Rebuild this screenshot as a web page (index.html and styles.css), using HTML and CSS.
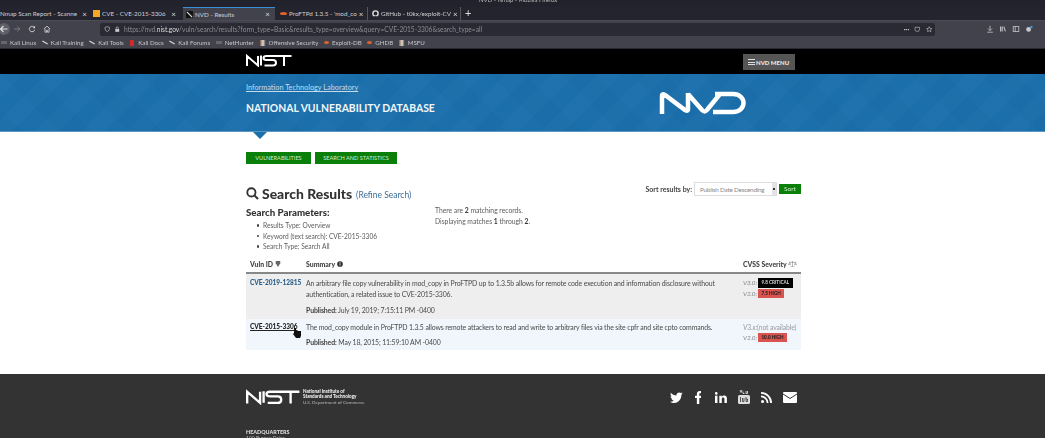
FILE: index.html
```html
<!DOCTYPE html>
<html lang="en">
<head>
  <meta charset="UTF-8">
  <title>NVD - Results</title>
  <link rel="stylesheet" href="styles.css">
</head>
<body>
  <div class="titlebar"><span class="window-title">NVD - Nmap - Mozilla Firefox</span></div>

  <div class="tabs">
    <div class="tab tab-first"><span class="tab-label">Nmap Scan Report - Scanne</span><span class="tab-x">×</span></div>
    <div class="tab tab-cve"><span class="favicon fav-orange"></span><span class="tab-label">CVE - CVE-2015-3306</span><span class="tab-x">×</span></div>
    <div class="tab tab-active"><svg class="favicon" viewBox="0 0 8 8"><rect width="8" height="8" fill="#111"/><path d="M1 1l6 6" stroke="#ddd" stroke-width="1.4"/></svg><span class="tab-label">NVD - Results</span><span class="tab-x">×</span></div>
    <div class="tab tab-pro"><span class="favicon fav-flame"></span><span class="tab-label">ProFTPd 1.3.5 - 'mod_co</span><span class="tab-x">×</span></div>
    <div class="tab tab-gh"><svg class="favicon" viewBox="0 0 8 8"><circle cx="4" cy="4" r="3" fill="none" stroke="#ddd" stroke-width="1.6"/><path d="M2.5 7.5h3" stroke="#2a2a35"/></svg><span class="tab-label">GitHub - t0kx/exploit-CV</span><span class="tab-x">×</span></div>
    <span class="tab-new">+</span>
  </div>

  <div class="toolbar">
    <span class="nav-back"><svg viewBox="0 0 10 10"><path d="M8.5 5h-7M4.5 2l-3 3 3 3" fill="none" stroke="#e4e4e8" stroke-width="1.1"/></svg></span>
    <svg class="nav-ico dim" viewBox="0 0 10 10"><path d="M1.5 5h7M5.5 2l3 3-3 3" fill="none" stroke="#85858c" stroke-width="1"/></svg>
    <svg class="nav-ico" viewBox="0 0 10 10"><path d="M8 3.2A3.4 3.4 0 1 0 8.4 6" fill="none" stroke="#d8d8dc" stroke-width="1.1"/><path d="M8.8 1v3h-3z" fill="#d8d8dc"/></svg>
    <svg class="nav-ico" viewBox="0 0 10 10"><path d="M1 5l4-3.5L9 5M2.5 4.5V9h2V6.5h1V9h2V4.5" fill="none" stroke="#d8d8dc" stroke-width="1"/></svg>
    <div class="urlbar">
      <svg class="url-ico" viewBox="0 0 10 10"><path d="M5 1l3.5 1.2c0 3.2-1 5.3-3.5 6.6C2.500 7.500 1.500 5.400 1.500 2.200z" fill="none" stroke="#c8c8cc" stroke-width="1"/></svg>
      <svg class="url-ico" viewBox="0 0 10 10"><rect x="2" y="4.500" width="6" height="4.500" fill="#c8c8cc"/><path d="M3.300 4.500V3a1.700 1.700 0 0 1 3.400 0v1.500" fill="none" stroke="#c8c8cc"/></svg>
      <span class="url-text">https://nvd.<b>nist.gov</b>/vuln/search/results?form_type=Basic&amp;results_type=overview&amp;query=CVE-2015-3306&amp;search_type=all</span>
      <span class="url-right">
        <span class="url-dots">•••</span>
        <svg class="url-ico" viewBox="0 0 10 10"><path d="M1.500 2h7v3a3.500 3.500 0 0 1-7 0z" fill="none" stroke="#b8b8bc"/></svg>
        <svg class="url-ico" viewBox="0 0 10 10"><path d="M5 1l1.200 2.700 2.900.3-2.200 1.900.7 2.900L5 7.300 2.400 8.800l.7-2.900L.9 4l2.900-.3z" fill="none" stroke="#c8c8cc" stroke-width=".9"/></svg>
      </span>
    </div>
    <div class="tool-right">
      <svg class="nav-ico" viewBox="0 0 10 10"><path d="M5 1v5.500M2.500 4.500L5 7l2.500-2.500M1.500 9h7" fill="none" stroke="#c8c8cc"/></svg>
      <svg class="nav-ico" viewBox="0 0 10 10"><path d="M2 2v6M4 2v6M6 2l2 6" fill="none" stroke="#c8c8cc" stroke-width="1.300"/></svg>
      <svg class="nav-ico" viewBox="0 0 10 10"><rect x="1.500" y="2" width="7" height="6" fill="none" stroke="#c8c8cc"/><path d="M4 2v6" stroke="#c8c8cc"/></svg>
      <svg class="nav-ico" viewBox="0 0 10 10"><circle cx="4.500" cy="5.500" r="3" fill="#c8c8cc"/><circle cx="8" cy="2.500" r="1.500" fill="#3a9ad9"/></svg>
    </div>
  </div>

  <div class="bookmarks">
    <span class="bm"><i class="bm-ico faint"></i>Kali Linux</span>
    <span class="bm"><i class="bm-ico dragon"></i>Kali Training</span>
    <span class="bm"><i class="bm-ico dragon"></i>Kali Tools</span>
    <span class="bm"><i class="bm-ico red"></i>Kali Docs</span>
    <span class="bm"><i class="bm-ico dragon"></i>Kali Forums</span>
    <span class="bm"><i class="bm-ico faint"></i>NetHunter</span>
    <span class="bm"><i class="bm-ico os"></i>Offensive Security</span>
    <span class="bm"><i class="bm-ico flame"></i>Exploit-DB</span>
    <span class="bm"><i class="bm-ico flame"></i>GHDB</span>
    <span class="bm"><i class="bm-ico os"></i>MSFU</span>
  </div>

  <header class="nist-bar">
    <div class="wrap nist-inner">
      <svg class="nist-logo" viewBox="0 0 92 24" role="img" aria-label="NIST">
        <path d="M2 23V3l22 19V3M30 2v20M70 3H41c-8 0-8 8 0 8h13c8 0 8 11 0 11H37M58 3h33M76 3v20" fill="none" stroke="#fff" stroke-width="4"/>
      </svg>
      <span class="menu-btn"><span class="burger"></span>NVD MENU</span>
    </div>
  </header>

  <section class="banner">
    <div class="wrap banner-inner">
      <div>
        <a class="itl" href="#">Information Technology Laboratory</a>
        <h1 class="nvd-name">NATIONAL VULNERABILITY DATABASE</h1>
      </div>
      <svg class="nvd-logo" viewBox="0 0 90 24" role="img" aria-label="NVD">
        <path d="M3 23V5c0-2 1-2 3-1l20 15c2 1 3 1 3-1V2M29 3l14 16c2 2 3 2 5 0L61 3M56 3h18c14 0 14 18 0 18H54" fill="none" stroke="#fff" stroke-width="4.500"/>
      </svg>
    </div>
  </section>
  <div class="notch"></div>

  <main class="wrap content">
    <nav class="green-nav">
      <a class="green-btn btn-vuln" href="#">VULNERABILITIES</a>
      <a class="green-btn btn-search" href="#">SEARCH AND STATISTICS</a>
    </nav>

    <div class="heading-row">
      <h2 class="results-title">
        <svg class="mag" viewBox="0 0 14 14"><circle cx="5.800" cy="5.800" r="4.400" fill="none" stroke="#333" stroke-width="2"/><path d="M9 9l4 4" stroke="#333" stroke-width="2.200"/></svg>
        <span>Search Results</span>
        <a class="refine" href="#">(Refine Search)</a>
      </h2>
      <form class="sort">
        <b>Sort results by:</b>
        <span class="sort-select">Publish Date Descending<i class="sort-arrows"></i></span>
        <span class="sort-btn">Sort</span>
      </form>
    </div>

    <div class="params-row">
      <div class="params">
        <h3>Search Parameters:</h3>
        <ul>
          <li>Results Type: Overview</li>
          <li>Keyword (text search): CVE-2015-3306</li>
          <li>Search Type: Search All</li>
        </ul>
      </div>
      <div class="matches">
        <p>There are <b>2</b> matching records.</p>
        <p>Displaying matches <b>1</b> through <b>2</b>.</p>
      </div>
    </div>

    <div class="grid-head">
      <span>Vuln ID <svg class="th-ico" viewBox="0 0 8 8"><path d="M1 0h6v3L4 8 1 3z" fill="#666"/></svg></span>
      <span>Summary <svg class="th-ico" viewBox="0 0 8 8"><circle cx="4" cy="4" r="3.800" fill="#333"/><path d="M4 3v3M4 1.400v1" stroke="#fff"/></svg></span>
      <span>CVSS Severity <svg class="th-ico scale" viewBox="0 0 12 9"><path d="M6 0v8M3 8.500h6M1 2h10M0 5.500l1.500-3.500L3 5.500zM9 5.500L10.500 2 12 5.500z" fill="none" stroke="#666" stroke-width=".7"/></svg></span>
    </div>

    <div class="result row-grey">
      <a class="cve" href="#">CVE-2019-12815</a>
      <div class="summary">
        <p>An arbitrary file copy vulnerability in mod_copy in ProFTPD up to 1.3.5b allows for remote code execution and information disclosure without authentication, a related issue to CVE-2015-3306.</p>
        <p class="published"><b>Published:</b> July 19, 2019; 7:15:11 PM -0400</p>
      </div>
      <div class="cvss">
        <div class="cvss-line"><i>V3.0:</i> <span class="sev sev-crit">9.8 CRITICAL</span></div>
        <div class="cvss-line"><i>V2.0:</i> <span class="sev sev-high">7.5 HIGH</span></div>
      </div>
    </div>

    <div class="result row-blue">
      <a class="cve cve-hover" href="#">CVE-2015-3306<svg class="hand" viewBox="0 0 9 10"><path d="M1 0h2v3h5v5l-1 2H3L0 6l1-1z" fill="#111"/></svg></a>
      <div class="summary">
        <p>The mod_copy module in ProFTPD 1.3.5 allows remote attackers to read and write to arbitrary files via the site cpfr and site cpto commands.</p>
        <p class="published"><b>Published:</b> May 18, 2015; 11:59:10 AM -0400</p>
      </div>
      <div class="cvss">
        <div class="cvss-line na"><i>V3.x:</i>(not available)</div>
        <div class="cvss-line"><i>V2.0:</i> <span class="sev sev-high">10.0 HIGH</span></div>
      </div>
    </div>
  </main>

  <footer class="footer">
    <div class="wrap">
      <div class="footer-top">
        <div class="foot-brand">
          <svg class="foot-logo" viewBox="0 0 92 24" role="img" aria-label="NIST">
            <path d="M2 23V3l22 19V3M30 2v20M70 3H41c-8 0-8 8 0 8h13c8 0 8 11 0 11H37M58 3h33M76 3v20" fill="none" stroke="#fff" stroke-width="4"/>
          </svg>
          <div class="foot-name"><b>National Institute of<br>Standards and Technology</b><br>U.S. Department of Commerce</div>
        </div>
        <div class="social">
          <svg class="tw" viewBox="0 0 14 12"><path d="M14 1.500l-1.500 1.200C12.500 8 9 12 4.500 12 2.800 12 1.200 11.500 0 10.600c1.600.2 3-.2 4.200-1.100C3 9.400 2 8.700 1.600 7.500h1.300C1.500 7.100.6 6 .6 4.500c.4.200.8.300 1.300.3C.6 3.900.3 2.200 1 .8 2.500 2.700 4.600 3.800 7 3.900 6.600 1.500 9.800-.8 11.800 1.200L13.600.6l-1 1.500z" fill="#fff"/></svg>
          <svg class="fb" viewBox="0 0 7 14"><path d="M2 14V7.500H0V5h2V3.200C2 1 3.300 0 5.200 0H7v2.400H5.800c-1 0-1.200.4-1.200 1.100V5H7l-.4 2.500h-2V14z" fill="#fff"/></svg>
          <svg viewBox="0 0 13 12"><rect y="4" width="2.700" height="8" fill="#fff"/><circle cx="1.350" cy="1.500" r="1.500" fill="#fff"/><path d="M4.700 12V4h2.600v1.200C8 4.200 9 3.800 10 3.800c2 0 3 1.300 3 3.500V12h-2.700V7.800c0-1.200-.4-1.800-1.400-1.800S7.400 6.700 7.400 7.800V12z" fill="#fff"/></svg>
          <svg class="yt" viewBox="0 0 12 14"><path d="M2 0l1 2.500L4 0M5 1.500v2h1.500M8 1v2.500h1.500V1" fill="none" stroke="#ddd" stroke-width=".9"/><rect y="5" width="12" height="9" rx="1.500" fill="#ddd"/><path d="M2.500 7v5M4.500 8v3.500h1.500V8M8 7v4.500h1.500V9H8" fill="none" stroke="#333" stroke-width=".8"/></svg>
          <svg viewBox="0 0 12 12"><circle cx="1.700" cy="10.300" r="1.700" fill="#fff"/><path d="M0 4.800a7.200 7.200 0 0 1 7.200 7.200M0 1a11 11 0 0 1 11 11" fill="none" stroke="#fff" stroke-width="2"/></svg>
          <svg viewBox="0 0 14 11"><rect width="14" height="11" rx="1" fill="#fff"/><path d="M0 2l7 4.500L14 2" fill="none" stroke="#333" stroke-width="1"/></svg>
        </div>
      </div>
      <h4 class="hq">HEADQUARTERS</h4>
      <p class="address">100 Bureau Drive</p>
    </div>
  </footer>
</body>
</html>
```

FILE: styles.css
```css
* { box-sizing: border-box; }

html, body {
  margin: 0;
  height: 438px;
  overflow: hidden;
}

body {
  font-family: 'Lato', 'Noto Sans', sans-serif;
  background: #fff;
  color: #555;
  filter: blur(0.35px);
}

p, h1, h2, h3, h4, ul { margin: 0; padding: 0; }

a { text-decoration: none; }

.wrap {
  width: 555px;
  margin-left: 246px;
}

/* browser chrome */
.titlebar {
  height: 7px;
  background: #22222c;
  position: relative;
  overflow: hidden;
}

.window-title {
  position: absolute;
  left: 479px;
  top: -4px;
  font-size: 6px;
  color: #bbb;
}

.tabs {
  height: 13px;
  background: #24242e;
  display: flex;
  align-items: stretch;
  color: #cfcfd4;
  font-size: 6.300px;
}

.tab {
  display: flex;
  align-items: center;
  gap: 2px;
  padding-right: 5px;
}

.tab-first { width: 92px; }
.tab-cve { width: 91px; padding-left: 1px; padding-right: 7px; }
.tab-active { width: 92px; background: #42424c; border-top: 1px solid #3a8fd6; padding-left: 3px; }
.tab-pro { width: 93px; padding-left: 5px; border-right: 1px solid #55555e; }
.tab-gh { width: 93px; padding-left: 4px; border-right: 1px solid #55555e; padding-right: 7px; }

.tab-label { flex: 1; white-space: nowrap; }
.tab-x { font-size: 8px; color: #ddd; }

.favicon { width: 7px; height: 7px; flex: none; display: block; }
.fav-orange { background: #f5a623; }
.fav-flame { background: #e2622c; border-radius: 50%; height: 3px; }

.tab-new { color: #ddd; font-size: 11px; line-height: 12px; margin-left: 4px; }

.toolbar {
  height: 17px;
  background: #42424c;
  border-top: 1px solid #4c4c56;
  display: flex;
  align-items: center;
}

.nav-back {
  width: 12px;
  height: 12px;
  margin-left: -2px;
  background: #5f5f68;
  border-radius: 50%;
  display: block;
}

.nav-back svg { display: block; width: 10px; height: 10px; margin: 1px; }

.nav-ico { width: 8px; height: 8px; flex: none; margin-left: 7px; }
.nav-ico.dim { margin-left: 3px; }

.urlbar {
  width: 835px;
  flex: none;
  height: 13px;
  margin-left: 49px;
  background: #2a2a34;
  border-radius: 2px;
  display: flex;
  align-items: center;
  padding: 0 3px 0 4px;
  gap: 3.500px;
  font-size: 6.600px;
  color: #8c8c94;
}

.url-ico { width: 6.500px; height: 6.500px; flex: none; }
.url-text { white-space: nowrap; }
.url-text b { color: #ddd; font-weight: 400; }
.url-right { margin-left: auto; display: flex; align-items: center; gap: 5px; color: #bbb; }
.url-dots { font-size: 4px; letter-spacing: -.5px; }

.tool-right { display: flex; margin-left: 51px; gap: 5px; }
.tool-right .nav-ico { margin-left: 0; }

.bookmarks {
  height: 12px;
  background: #42424c;
  display: flex;
  align-items: center;
  gap: 5.500px;
  padding-left: 1px;
  font-size: 6.200px;
  color: #c4c4ca;
  border-bottom: 1px solid #2a2a32;
}

.bm { display: flex; align-items: center; gap: 3px; white-space: nowrap; }

.bm-ico { display: block; width: 6px; height: 6px; flex: none; }
.dragon { height: 1px; background: #ddd; transform: rotate(30deg); }
.faint { height: 3px; background: #66666e; }
.red { background: #d02a2a; border-left: 1px solid #42424c; border-right: 1px solid #42424c; }
.os { background: linear-gradient(90deg, #8a5a3c, #ddd, #333); }
.flame { width: 5px; height: 3px; background: #e2622c; border-radius: 50%; }

/* site header */
.nist-bar {
  height: 25px;
  background: #000;
}

.nist-inner {
  display: flex;
  align-items: center;
  justify-content: space-between;
  height: 25px;
  padding-right: 6px;
}

.nist-logo { width: 46px; height: 13px; margin-top: -3px; }

.menu-btn {
  display: flex;
  align-items: center;
  gap: 1px;
  width: 52px;
  height: 16px;
  padding-left: 5px;
  background: #555;
  color: #e6e6e6;
  font-size: 6px;
  font-weight: 900;
  white-space: nowrap;
  margin-top: 1px;
}

.burger {
  flex: none;
  width: 7px;
  height: 6px;
  border-top: 1px solid #ddd;
  border-bottom: 1px solid #ddd;
  background: linear-gradient(#ddd, #ddd) center/100% 1px no-repeat;
}

.banner {
  height: 58px;
  background-color: #1b6fab;
  background-image:
    linear-gradient(135deg, rgba(255,255,255,.018) 25%, transparent 25%, transparent 50%, rgba(255,255,255,.018) 50%, rgba(255,255,255,.018) 75%, transparent 75%),
    linear-gradient(45deg, rgba(0,0,0,.018) 25%, transparent 25%, transparent 50%, rgba(0,0,0,.018) 50%, rgba(0,0,0,.018) 75%, transparent 75%);
  background-size: 46px 46px, 70px 70px;
  border-bottom: 1px solid #5b97c2;
}

.banner-inner {
  display: flex;
  justify-content: space-between;
  padding-top: 9px;
  padding-right: 52px;
}

.itl {
  display: block;
  color: #c6dcec;
  font-size: 7.300px;
  text-decoration: underline;
  line-height: 9px;
}

.nvd-name {
  color: #f2f6fa;
  font-size: 10.400px;
  font-weight: 700;
  line-height: 12px;
  margin-top: 10px;
}

.nvd-logo { width: 90px; height: 24px; margin-top: 8px; }

.notch {
  width: 0;
  height: 0;
  margin-left: 253px;
  border-left: 7px solid transparent;
  border-right: 7px solid transparent;
  border-top: 7px solid #1b6fab;
}

.content { height: 235px; padding-top: 13px; }

.green-nav {
  display: flex;
  gap: 4px;
}

.green-btn {
  display: block;
  height: 12px;
  line-height: 12px;
  background: #0a7f0a;
  color: #d8ecd8;
  font-size: 5.600px;
  text-align: center;
}

.btn-vuln { width: 65px; }
.btn-search { width: 82px; }

.heading-row {
  display: flex;
  justify-content: space-between;
  margin-top: 19px;
  align-items: flex-start;
}

.results-title {
  color: #333;
  font-size: 13.900px;
  font-weight: 900;
  line-height: 18px;
  display: flex;
  align-items: center;
  white-space: nowrap;
}

.mag { width: 13px; height: 13px; margin-right: 3px; }
.refine { color: #3a6d96; font-size: 8.500px; font-weight: 400; margin-left: 4px; margin-top: 3px; }

.sort {
  display: flex;
  align-items: center;
  gap: 2px;
  font-size: 7px;
  color: #444;
  margin-top: -1px;
}

.sort-select {
  width: 83px;
  height: 14px;
  line-height: 13px;
  background: #fff;
  border: 1px solid #ddd;
  padding-left: 5px;
  color: #888;
  font-size: 6.300px;
  letter-spacing: -.2px;
  position: relative;
}

.sort-arrows {
  position: absolute;
  right: 0;
  top: 0;
  width: 4px;
  height: 12px;
  background: linear-gradient(#333, #333) center/2px 2px no-repeat, #e4e4e4;
}

.sort-btn {
  width: 22px;
  height: 10px;
  line-height: 10px;
  background: #0a7f0a;
  color: #d8ecd8;
  font-size: 6.500px;
  text-align: center;
}

.params-row {
  display: grid;
  grid-template-columns: 189px 1fr;
  margin-top: 2px;
}

.params h3 {
  color: #333;
  font-size: 9.700px;
  font-weight: 900;
  line-height: 12px;
  white-space: nowrap;
}

.params ul {
  list-style: none;
  margin-top: 2px;
  font-size: 6.600px;
  color: #5c5c5c;
}

.params li {
  line-height: 10.500px;
  padding-left: 17px;
  position: relative;
}

.params li::before {
  content: "";
  position: absolute;
  left: 10.500px;
  top: 4px;
  width: 2.500px;
  height: 2.500px;
  border-radius: 50%;
  background: #444;
}

.matches {
  font-size: 6.750px;
  color: #5c5c5c;
  line-height: 11px;
  margin-top: -1px;
}

.matches b { color: #333; }

.grid-head {
  display: grid;
  grid-template-columns: 56px 437px 1fr;
  padding-left: 4px;
  height: 19px;
  margin-top: 3.500px;
  align-items: center;
  font-size: 6.900px;
  font-weight: 900;
  color: #444;
  border-bottom: 2px solid #888;
}

.th-ico { width: 6px; height: 6px; }
.th-ico.scale { width: 9px; }

.result {
  display: grid;
  grid-template-columns: 56px 437px 1fr;
  padding-left: 4px;
  font-size: 6.900px;
  letter-spacing: -.12px;
  color: #4a4a4a;
}

.row-grey { background: #eeeeef; height: 45px; padding-top: 4px; }
.row-blue { background: #f0f6fc; height: 31px; padding-top: 3px; }

.cve {
  color: #2a5d88;
  font-size: 6.500px;
  letter-spacing: 0;
  font-weight: 900;
  line-height: 10.500px;
}

.cve-hover {
  color: #222;
  text-decoration: underline;
  position: relative;
  height: 10.500px;
}

.hand {
  position: absolute;
  left: 43px;
  top: 6px;
  width: 9px;
  height: 10px;
}

.summary p { line-height: 10.500px; }

.published { margin-top: 6px; }
.row-blue .published { margin-top: 4px; }
.published b { color: #444; }

.cvss { font-size: 6.400px; color: #888; }
.cvss-line { height: 10.500px; line-height: 10.500px; white-space: nowrap; }
.cvss i { font-style: italic; }
.na { color: #9a9aa2; }
.cvss-line.na { font-size: 6.800px; }

.sev {
  display: inline-block;
  height: 9.500px;
  line-height: 9.500px;
  padding: 0 3.500px;
  font-size: 4.600px;
  font-weight: 900;
  letter-spacing: 0;
  vertical-align: top;
  margin-left: -.5px;
}

.sev-crit { background: #000; color: #ccc; }
.sev-high { background: #d9534f; color: #222; }

/* footer */
.footer {
  height: 64px;
  background: #333;
  padding-top: 15px;
  color: #ddd;
}

.footer-top {
  display: flex;
  justify-content: space-between;
  align-items: center;
}

.foot-brand { display: flex; align-items: center; gap: 3px; }
.foot-logo { width: 54px; height: 16px; }

.foot-name {
  font-size: 4.600px;
  line-height: 5.400px;
  color: #bbb;
}

.foot-name b { color: #eee; font-weight: 900; }

.social {
  display: flex;
  align-items: center;
  gap: 11px;
  padding-right: 4px;
}

.social svg { display: block; height: 11px; }
.social .yt { height: 14px; }
.social .fb { height: 13px; margin-right: 3px; }
.social .tw { margin-right: 1px; }

.hq {
  font-size: 5.400px;
  font-weight: 900;
  color: #ddd;
  margin-top: 24px;
  line-height: 6px;
}

.address {
  font-size: 5px;
  color: #bbb;
  line-height: 6px;
}
```
